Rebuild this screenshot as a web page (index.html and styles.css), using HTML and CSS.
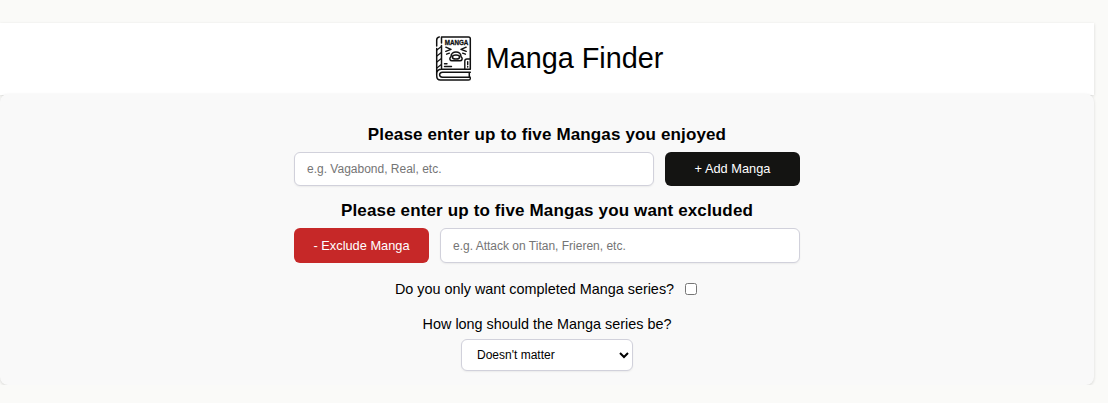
FILE: index.html
```html
<!DOCTYPE html>
<html lang="en">
<head>
<meta charset="utf-8">
<title>Manga Finder</title>
<link rel="stylesheet" href="styles.css">
</head>
<body>
<header class="header">
  <svg class="logo" viewBox="0 0 45 45" fill="none" stroke="#111" stroke-width="1.5" stroke-linecap="round" stroke-linejoin="round">
    <path d="M10.5 .9H37.5Q39.3 .9 39.3 2.7V33.2H10.5M8.3 .9Q5.7 1.2 5.7 4V10M5.7 12.5V39.5Q5.7 44.1 9.4 44.1H37.5Q39.3 44.1 39.3 42.5M10.5 .9V7M10.5 9.5V33.2M5.7 38Q5.7 33.2 10.5 33.2"/>
    <path stroke-width="1.2" d="M5.9 14L10 10.8M5.9 20L10 16.8M5.9 26L10 22.8M5.9 32L10 28.8"/>
    <path d="M39.3 36.3H11.5Q8.6 36.6 8.6 38.8T11.5 41.3H39.3M38.3 36.5V41"/>
    <text class="logo-text" x="13.7" y="8.8" textLength="23.6" lengthAdjust="spacingAndGlyphs">MANGA</text>
    <path stroke-width="1.4" d="M14.8 11.2L20 13.4L14.8 15.4M35.2 11.2L30 13.4L35.2 15.4M18.4 17.2L15.6 18.2M31.6 17.2L34.4 18.2"/>
    <path d="M20 20.5C20 14.4 30 14.4 30 20.5C32.4 22.8 30.8 25 28.5 24.7H21.5C19.2 25 17.6 22.8 20 20.5Z"/>
    <ellipse cx="25" cy="21" rx="3.6" ry="2.1"/>
    <path stroke-width="1.4" d="M39 23H36Q33.8 23 33.8 25V32.8M36.7 25.8V28.5M36.7 30.5V31M13.5 27.8H16M13.5 30.5H20.5"/>
  </svg>
  <h1 class="title">Manga Finder</h1>
</header>
<main class="panel">
  <h2 class="heading">Please enter up to five Mangas you enjoyed</h2>
  <div class="row">
    <input class="field" type="text" placeholder="e.g. Vagabond, Real, etc.">
    <button class="button button-add">+ Add Manga</button>
  </div>
  <h2 class="heading heading-exclude">Please enter up to five Mangas you want excluded</h2>
  <div class="row row-exclude">
    <button class="button button-exclude">- Exclude Manga</button>
    <input class="field" type="text" placeholder="e.g. Attack on Titan, Frieren, etc.">
  </div>
  <label class="completed">Do you only want completed Manga series?<input class="check" type="checkbox"></label>
  <label class="length-label" for="length">How long should the Manga series be?</label>
  <select class="select" id="length"><option>Doesn't matter</option></select>
</main>
</body>
</html>
```
FILE: styles.css
```css
* { box-sizing: border-box; }
body {
  margin: 0;
  padding-top: 23px;
  background: #fafaf8;
  color: #000;
  font-family: "Liberation Sans", Arial, sans-serif;
}
.header {
  width: 1094px;
  height: 72px;
  padding-bottom: 1px;
  display: flex;
  justify-content: center;
  align-items: center;
  gap: 10px;
  background: #fff;
  box-shadow: 0 1px 3px rgba(0, 0, 0, .14);
}
.logo { width: 45px; height: 45px; }
.logo-text { font: bold 6.8px "Liberation Sans", Arial, sans-serif; fill: #111; stroke: #111; stroke-width: .3px; }
.title { margin: 0; padding-bottom: 2px; font-size: 28.8px; font-weight: 400; line-height: 34px; }
.panel {
  width: 1094px;
  height: 291px;
  margin-top: -1px;
  padding-top: 31px;
  display: flex;
  flex-direction: column;
  align-items: center;
  background: #f9f9f9;
  border-radius: 8px;
  box-shadow: 0 1px 3px rgba(0, 0, 0, .14);
}
.heading { margin: 0; font-size: 17px; line-height: 20px; letter-spacing: .14px; }
.heading-exclude { margin-top: 15px; }
.row { display: flex; gap: 11px; width: 506px; height: 34px; margin-top: 7px; }
.row-exclude { height: 35px; }
.field {
  width: 360px;
  padding: 0 12px;
  border: 1px solid #d1d1db;
  border-radius: 6px;
  background: #fff;
  box-shadow: 0 1px 2px rgba(0, 0, 0, .06);
  font: 12px "Liberation Sans", Arial, sans-serif;
}
.field::placeholder { color: #757575; }
.button {
  width: 135px;
  padding: 0 0 1px;
  border: 0;
  border-radius: 6px;
  color: #fff;
  font: 12.8px "Liberation Sans", Arial, sans-serif;
}
.button-add { background: #141412; }
.button-exclude { background: #c62828; }
.completed { display: flex; align-items: center; height: 18px; margin-top: 17px; font-size: 14.4px; }
.check { width: 12px; height: 12px; margin: 0 2px 0 11px; }
.length-label { margin-top: 17px; font-size: 14.4px; line-height: 18px; }
.select {
  width: 172px;
  height: 32px;
  margin-top: 6px;
  padding: 0 0 0 11px;
  border: 1px solid #d1d1db;
  border-radius: 6px;
  background: #fff;
  box-shadow: 0 1px 2px rgba(0, 0, 0, .06);
  color: #000;
  font: 12px "Liberation Sans", Arial, sans-serif;
}
```
